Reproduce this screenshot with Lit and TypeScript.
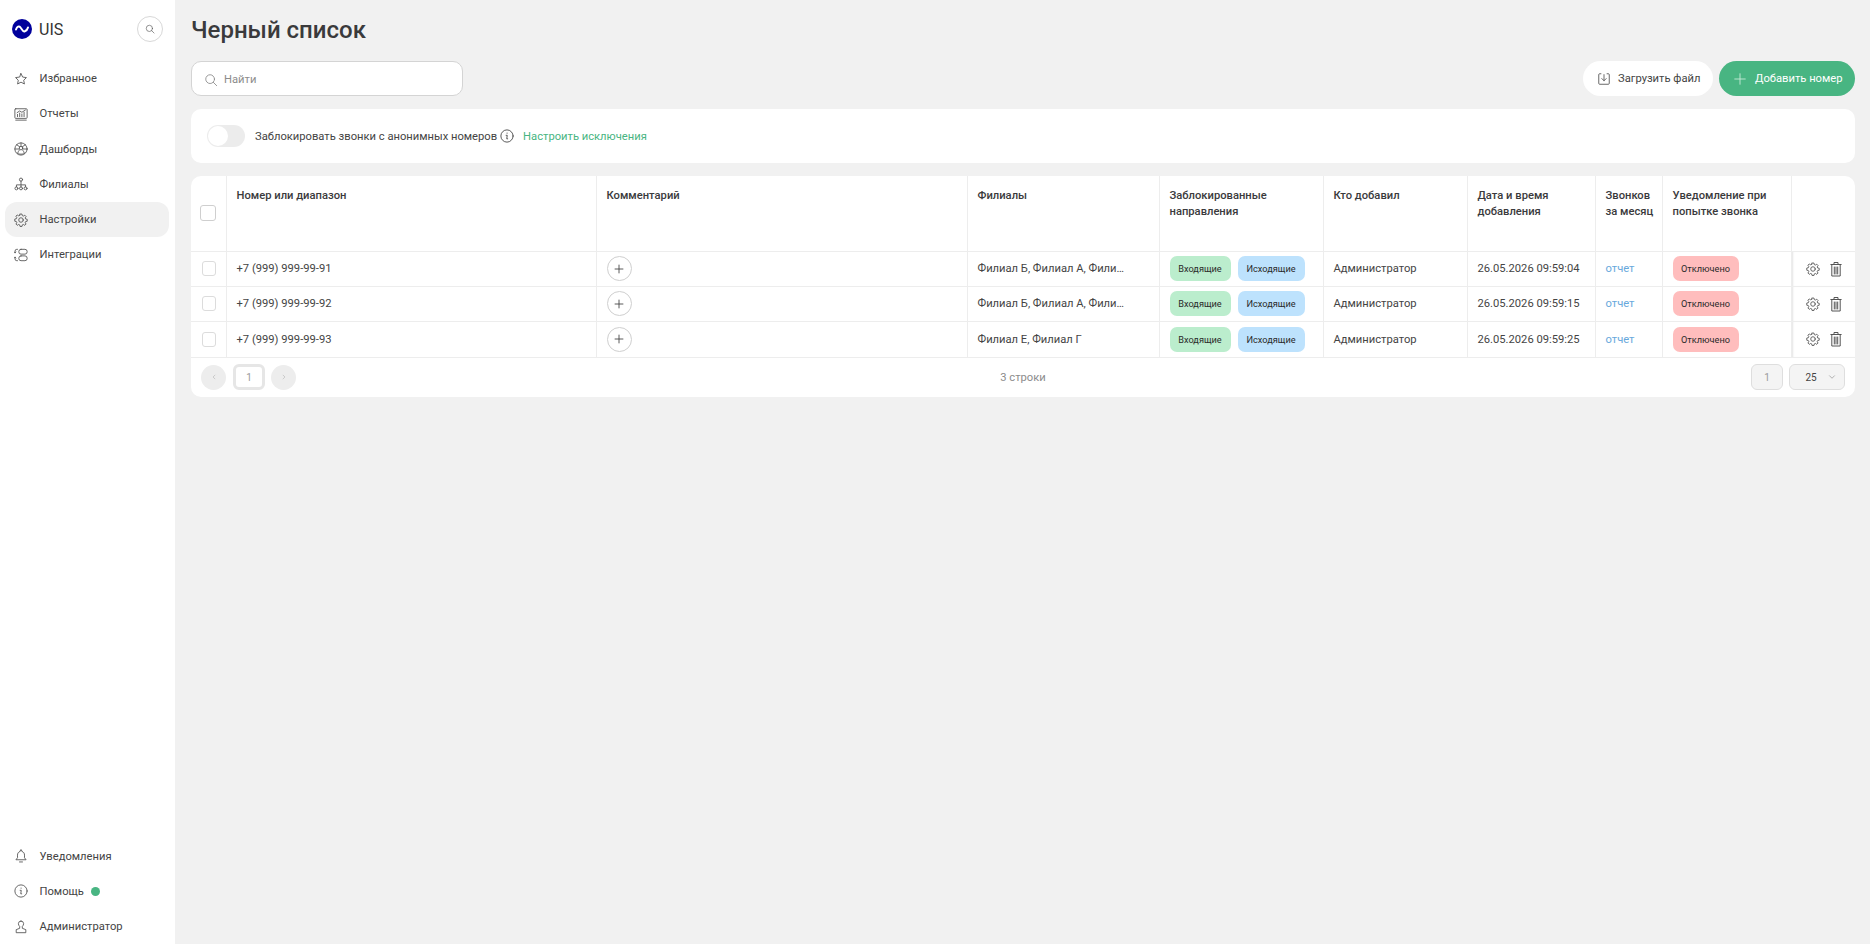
import { LitElement, css, html, svg } from 'lit';
import { customElement } from 'lit/decorators.js';

const icon = (body: unknown, size = 16) => html`<svg width=${size} height=${size} viewBox="0 0 16 16" fill="none" stroke="currentColor" stroke-width="1" stroke-linecap="round" stroke-linejoin="round">${body}</svg>`;

const gearPath = svg`<path d="M6.900 1.200h2.200l.4 1.800 1.200.5 1.600-1 1.500 1.500-1 1.600.5 1.200 1.800.4v2.200l-1.800.4-.5 1.200 1 1.600-1.500 1.500-1.600-1-1.200.5-.4 1.800H6.900l-.4-1.800-1.200-.5-1.600 1-1.500-1.500 1-1.600-.5-1.200-1.800-.4V6.900l1.800-.4.5-1.200-1-1.600 1.500-1.500 1.600 1 1.200-.5z"/><circle cx="8" cy="8" r="2.600"/>`;
const trashPath = svg`<path d="M2.800 3.500h10.400M6 3.500V1.500h4v2M3.800 3.500V15h8.400V3.500M6.300 6v7M8 6v7M9.700 6v7"/>`;

const icons = {
  star: svg`<path d="M8 1.800l1.900 4 4.300.6-3.100 3 .8 4.300L8 11.600l-3.900 2.100.8-4.300-3.100-3 4.300-.6z"/>`,
  reports: svg`<rect x="1" y="2" width="14" height="11" rx="1"/><path d="M2 15h12M4 11V8.500M6.500 11V7M9 11V8M11.500 11V6M3.500 6.500l3-2 2.500 1.500 4-2.500"/>`,
  dash: svg`<circle cx="8" cy="8" r="7"/><circle cx="8" cy="7" r="2"/><path d="M1 8h5M10 8h5M3 3l3.500 2.500M13 3L9.500 5.500M8 1v4M3.500 12.500c1.500 2 7.500 2 9 0M6 9.500c-1 1-1.500 2-1.500 3M10 9.500c1 1 1.500 2 1.500 3"/>`,
  branches: svg`<circle cx="8" cy="3" r="1.800"/><circle cx="2.800" cy="13" r="1.700"/><circle cx="8" cy="13" r="1.700"/><circle cx="13.200" cy="13" r="1.700"/><path d="M8 4.800v6.500M2.800 11.300V9h10.400v2.300"/>`,
  gear: gearPath,
  integr: svg`<rect x="5.500" y="1.500" width="9.500" height="5.500" rx="2.500"/><rect x="5.500" y="9" width="9.500" height="5.500" rx="2.500"/><path d="M1.200 5.500V3.500a2 2 0 0 1 2-2h.8M.4 4.600l.8 1 .9-1M1.200 10.500v2a2 2 0 0 0 2 2h.8M.4 11.400l.8-1 .9 1"/>`,
  bell: svg`<path d="M8 1.200a1 1 0 0 1 1 1v.6c2 .5 3 2.200 3 4.200v3l1.800 2.300H2.200L4 10V7c0-2 1-3.700 3-4.200v-.6a1 1 0 0 1 1-1zM6.300 14.800h3.400"/>`,
  info: svg`<circle cx="8" cy="8" r="7"/><path d="M7 7.200h1.300l-.6 4h1.100M8.100 4.600v.3"/>`,
  user: svg`<path d="M8 1.200a3 3 0 0 1 3 3c0 1.500-.7 2.300-1.500 3v2.300l4 1.500v3.500h-11V11l4-1.500V7.200C5.700 6.500 5 5.700 5 4.200a3 3 0 0 1 3-3z"/>`,
};

type NavItem = { label: string; icon: keyof typeof icons; active?: boolean; dot?: boolean };

const topNav: NavItem[] = [
  { label: 'Избранное', icon: 'star' },
  { label: 'Отчеты', icon: 'reports' },
  { label: 'Дашборды', icon: 'dash' },
  { label: 'Филиалы', icon: 'branches' },
  { label: 'Настройки', icon: 'gear', active: true },
  { label: 'Интеграции', icon: 'integr' },
];

const bottomNav: NavItem[] = [
  { label: 'Уведомления', icon: 'bell' },
  { label: 'Помощь', icon: 'info', dot: true },
  { label: 'Администратор', icon: 'user' },
];

const rows = [
  { phone: '+7 (999) 999-99-91', branches: 'Филиал Б, Филиал А, Фили…', date: '26.05.2026 09:59:04' },
  { phone: '+7 (999) 999-99-92', branches: 'Филиал Б, Филиал А, Фили…', date: '26.05.2026 09:59:15' },
  { phone: '+7 (999) 999-99-93', branches: 'Филиал Е, Филиал Г', date: '26.05.2026 09:59:25' },
];

const searchIcon = svg`<circle cx="7" cy="7" r="5"/><path d="M10.700 10.700L14.500 14.500"/>`;

@customElement('app-root')
export class AppRoot extends LitElement {
  static styles = css`
    :host {
      display: flex;
      width: 1870px;
      height: 944px;
      overflow: hidden;
      background: #f1f1f1;
      font-family: Roboto, 'Noto Sans', sans-serif;
      font-size: 11.2px;
      color: #444;
    }
    svg { display: block; flex: none; }

    .sidebar {
      width: 175px;
      flex: none;
      background: #fff;
      display: flex;
      flex-direction: column;
      padding: 0 6px 0 5px;
      box-sizing: border-box;
    }
    .brand {
      height: 58px;
      display: flex;
      align-items: center;
      padding: 0 6px 0 7px;
      font-size: 16px;
      color: #333;
    }
    .logo { margin-right: 7px; }
    .brand-name { flex: 1; }
    .round-search {
      width: 26px;
      height: 26px;
      border-radius: 50%;
      border: 1px solid #d8d8d8;
      display: flex;
      align-items: center;
      justify-content: center;
      box-sizing: border-box;
      color: #555;
    }
    .nav { display: flex; flex-direction: column; margin-top: 3px; gap: 0.25px; }
    .nav.bottom { margin-top: auto; margin-bottom: 0; }
    .nav-item {
      height: 35px;
      display: flex;
      align-items: center;
      gap: 11.5px;
      padding: 0 9px;
      border-radius: 12px;
      white-space: nowrap;
    }
    .nav-item svg { color: #555; }
    .nav-item.active { background: #f1f1f1; }
    .dot { width: 9px; height: 9px; border-radius: 50%; background: #48b582; margin-left: -4.5px; }

    .main {
      flex: 1;
      padding: 0 15px 0 16px;
      min-width: 0;
      display: flex;
      flex-direction: column;
    }
    h1 {
      margin: 0;
      height: 61px;
      line-height: 60px;
      font-size: 24px;
      font-weight: 500;
      color: #3a3a3c;
    }
    .toolbar {
      display: flex;
      align-items: center;
      height: 35px;
      gap: 6px;
    }
    .search {
      width: 272px;
      height: 35px;
      box-sizing: border-box;
      border: 1px solid #d4d4d4;
      border-radius: 10px;
      background: #fff;
      display: flex;
      align-items: center;
      gap: 6px;
      padding: 2px 12px 0;
      color: #8c8c8c;
      margin-right: auto;
    }
    .btn {
      height: 35px;
      border-radius: 18px;
      display: flex;
      align-items: center;
      box-sizing: border-box;
      white-space: nowrap;
    }
    .btn.ghost { background: #fff; padding-left: 14px; gap: 7px; width: 130px; }
    .btn.primary { background: #48b582; color: #fff; padding-left: 14px; gap: 8px; width: 136px; }
    .btn.ghost svg { color: #555; }
    .btn.primary svg { color: #c9ecd9; }

    .anon {
      margin-top: 13px;
      height: 54px;
      background: #fff;
      border-radius: 10px;
      display: flex;
      align-items: center;
      padding: 0 16px;
    }
    .toggle {
      width: 38px;
      height: 22px;
      border-radius: 11px;
      background: #ececec;
      margin-right: 10px;
      display: flex;
      align-items: center;
      padding: 0 2px;
      box-sizing: border-box;
    }
    .knob { width: 20px; height: 20px; border-radius: 50%; background: #fff; margin-left: -1px; }
    .anon svg { margin: 0 9px 0 3px; color: #444; }
    .link { color: #48b582; }

    .card {
      margin-top: 13px;
      background: #fff;
      border-radius: 10px;
      overflow: hidden;
    }
    table { border-collapse: collapse; table-layout: fixed; width: 100%; }
    th, td {
      border-right: 1px solid #ededed;
      border-bottom: 1px solid #ededed;
      padding: 0 10px;
      text-align: left;
      box-sizing: border-box;
    }
    th:last-child, td:last-child { border-right: none; }
    th {
      height: 75px;
      vertical-align: top;
      padding: 12px 4px 0 10px;
      font-weight: 500;
      line-height: 16px;
      color: #3a3a3c;
    }
    th.check { vertical-align: middle; padding: 0 0 0 9px; }
    td { height: 35px; white-space: nowrap; }
    tr:last-child td { height: 36px; }
    td.check { padding: 0 0 0 11px; }
    .box {
      width: 14px;
      height: 15px;
      box-sizing: border-box;
      border: 1px solid #dcdcdc;
      border-radius: 3px;
      background: #fff;
    }
    th .box { width: 16px; height: 16px; border-color: #cfcfcf; }
    .add {
      width: 25px;
      height: 25px;
      box-sizing: border-box;
      border: 1px solid #cfcfcf;
      border-radius: 50%;
      display: flex;
      align-items: center;
      justify-content: center;
      color: #444;
    }
    .tags { display: flex; gap: 7px; }
    .tag {
      height: 25px;
      border-radius: 7px;
      display: flex;
      align-items: center;
      justify-content: center;
      font-size: 9.2px;
      color: #2a2a2a;
      box-sizing: border-box;
    }
    .tag.in { width: 61px; background: #bbedcd; }
    .tag.out { width: 67px; background: #bde2fd; }
    .tag.off { width: 66px; background: #ffbdbd; }
    .report { color: #68a8dc; }
    td.actions { padding: 0 0 0 14px; box-shadow: inset 2px 0 2px -1px #e4e4e4; }
    .action-icons { display: flex; align-items: center; gap: 8px; color: #555; }

    .footer {
      height: 39px;
      display: grid;
      grid-template-columns: 1fr auto 1fr;
      align-items: center;
      padding: 0 10px;
    }
    .pager { display: flex; align-items: center; gap: 7px; }
    .pg-arrow {
      width: 25px;
      height: 25px;
      border-radius: 50%;
      background: #ededed;
      display: flex;
      align-items: center;
      justify-content: center;
      color: #b5b5b5;
    }
    .pg-cur {
      width: 32px;
      height: 26px;
      border: 3px solid #e6e6e6;
      border-radius: 6px;
      background: #fff;
      box-sizing: border-box;
      display: flex;
      align-items: center;
      justify-content: center;
      font-size: 10px;
      color: #9a9a9a;
    }
    .pg-cur + .pg-arrow { margin-left: -1px; }
    .count { color: #8c8c8c; }
    .right { display: flex; justify-content: flex-end; gap: 6px; }
    .mini {
      height: 26px;
      border: 1px solid #dedede;
      border-radius: 6px;
      background: #f4f4f4;
      box-sizing: border-box;
      display: flex;
      align-items: center;
      justify-content: center;
      font-size: 10px;
      color: #9a9a9a;
    }
    .mini.page { width: 32px; }
    .mini.size { width: 56px; color: #444; gap: 10px; padding-left: 8px; }
    .mini.size svg { color: #888; }
  `;

  private navRow(item: NavItem) {
    return html`
      <div class="nav-item ${item.active ? 'active' : ''}">
        ${icon(icons[item.icon], 14)}
        <span>${item.label}</span>
        ${item.dot ? html`<span class="dot"></span>` : ''}
      </div>
    `;
  }

  render() {
    return html`
      <aside class="sidebar">
        <div class="brand">
          <svg class="logo" width="20" height="20" viewBox="0 0 20 20">
            <circle cx="10" cy="10" r="10" fill="#00009c"></circle>
            <path d="M4 10.500C5 7.500 7 6.500 8.500 8.500S11 13 12.500 12.500 15.500 10.500 16 8.500" fill="none" stroke="#fff" stroke-width="2" stroke-linecap="round"></path>
          </svg>
          <span class="brand-name">UIS</span>
          <span class="round-search">${icon(searchIcon, 10)}</span>
        </div>
        <nav class="nav">${topNav.map((n) => this.navRow(n))}</nav>
        <nav class="nav bottom">${bottomNav.map((n) => this.navRow(n))}</nav>
      </aside>
      <main class="main">
        <h1>Черный список</h1>
        <div class="toolbar">
          <div class="search">${icon(searchIcon, 14)}<span>Найти</span></div>
          <div class="btn ghost">
            ${icon(svg`<path d="M4.500 2H3a1 1 0 0 0-1 1v10a1 1 0 0 0 1 1h10a1 1 0 0 0 1-1V3a1 1 0 0 0-1-1h-1.500M8 3v7M5.500 7.500L8 10l2.500-2.500"/>`, 14)}
            <span>Загрузить файл</span>
          </div>
          <div class="btn primary">
            ${icon(svg`<path d="M8 2v12M2 8h12"/>`, 14)}
            <span>Добавить номер</span>
          </div>
        </div>
        <section class="anon">
          <span class="toggle"><span class="knob"></span></span>
          <span>Заблокировать звонки с анонимных номеров</span>
          ${icon(icons.info, 14)}
          <span class="link">Настроить исключения</span>
        </section>
        <section class="card">
          <table>
            <colgroup>
              <col style="width:35px" /><col style="width:370px" /><col style="width:371px" />
              <col style="width:192px" /><col style="width:164px" /><col style="width:144px" />
              <col style="width:128px" /><col style="width:67px" /><col style="width:129px" /><col />
            </colgroup>
            <thead>
              <tr>
                <th class="check"><div class="box"></div></th>
                <th>Номер или диапазон</th>
                <th>Комментарий</th>
                <th>Филиалы</th>
                <th>Заблокированные<br />направления</th>
                <th>Кто добавил</th>
                <th>Дата и время<br />добавления</th>
                <th>Звонков<br />за месяц</th>
                <th>Уведомление при<br />попытке звонка</th>
                <th></th>
              </tr>
            </thead>
            <tbody>
              ${rows.map(
                (r) => html`
                  <tr>
                    <td class="check"><div class="box"></div></td>
                    <td>${r.phone}</td>
                    <td><div class="add">${icon(svg`<path d="M8 3.500v9M3.500 8h9"/>`, 14)}</div></td>
                    <td>${r.branches}</td>
                    <td><div class="tags"><span class="tag in">Входящие</span><span class="tag out">Исходящие</span></div></td>
                    <td>Администратор</td>
                    <td>${r.date}</td>
                    <td><span class="report">отчет</span></td>
                    <td><span class="tag off">Отключено</span></td>
                    <td class="actions"><div class="action-icons">${icon(gearPath, 14)}${icon(trashPath)}</div></td>
                  </tr>
                `
              )}
            </tbody>
          </table>
          <div class="footer">
            <div class="pager">
              <span class="pg-arrow">${icon(svg`<path d="M9.500 5L6.500 8l3 3"/>`, 10)}</span>
              <span class="pg-cur">1</span>
              <span class="pg-arrow">${icon(svg`<path d="M6.500 5l3 3-3 3"/>`, 10)}</span>
            </div>
            <div class="count">3 строки</div>
            <div class="right">
              <span class="mini page">1</span>
              <span class="mini size">25 ${icon(svg`<path d="M4 6l4 4 4-4"/>`, 10)}</span>
            </div>
          </div>
        </section>
      </main>
    `;
  }
}
